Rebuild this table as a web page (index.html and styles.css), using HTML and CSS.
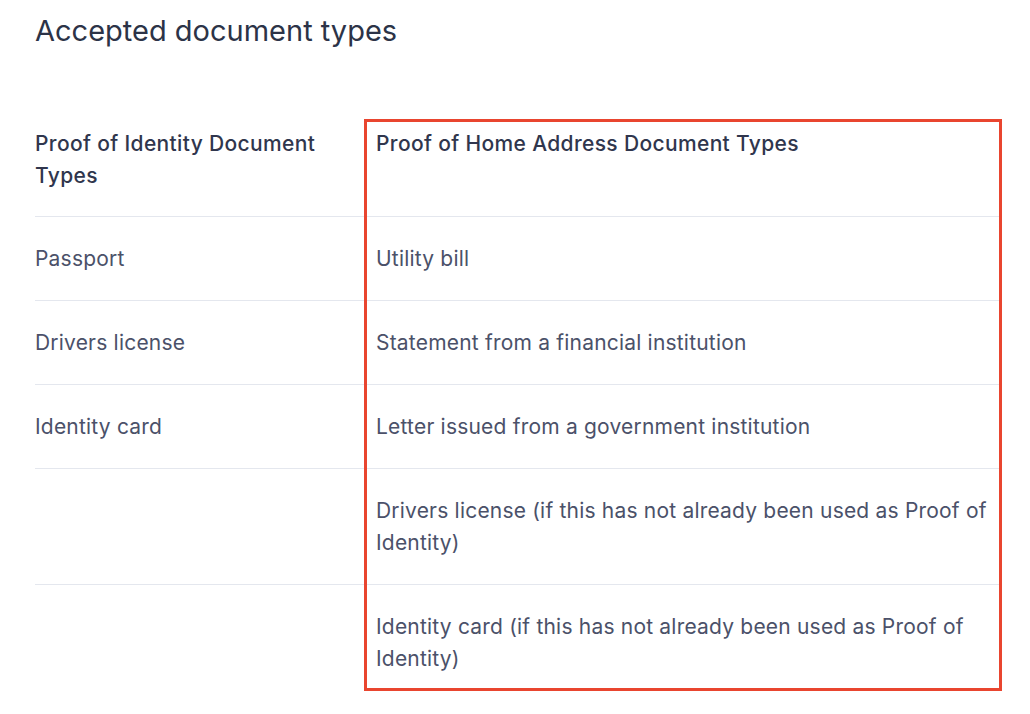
FILE: index.html
```html
<!DOCTYPE html>
<html lang="en">
<head>
<meta charset="utf-8">
<title>Accepted document types</title>
<link rel="stylesheet" href="styles.css">
</head>
<body>
<main class="page">
  <h1 class="title">Accepted document types</h1>
  <div class="table-wrap">
    <table class="doc-table">
      <colgroup>
        <col class="c-id">
        <col class="c-addr">
      </colgroup>
      <thead>
        <tr>
          <th class="col-id">Proof of Identity Document Types</th>
          <th class="col-addr">Proof of Home Address Document Types</th>
        </tr>
      </thead>
      <tbody>
        <tr><td class="col-id">Passport</td><td class="col-addr">Utility bill</td></tr>
        <tr><td class="col-id">Drivers license</td><td class="col-addr">Statement from a financial institution</td></tr>
        <tr><td class="col-id">Identity card</td><td class="col-addr">Letter issued from a government institution</td></tr>
        <tr><td class="col-id"></td><td class="col-addr">Drivers license (if this has not already been used as Proof of Identity)</td></tr>
        <tr><td class="col-id"></td><td class="col-addr">Identity card (if this has not already been used as Proof of Identity)</td></tr>
      </tbody>
    </table>
    <div class="highlight" aria-hidden="true"></div>
  </div>
</main>
</body>
</html>
```

FILE: styles.css
```css
html, body {
  margin: 0;
  padding: 0;
  background: #ffffff;
}

.page {
  padding: 11px 29px 0 35px;
  font-family: Inter, "Noto Sans", "Liberation Sans", sans-serif;
  color: #4b5169;
}

.title {
  margin: 0;
  font-size: 29px;
  line-height: 40px;
  font-weight: 400;
  color: #2c3347;
}

.table-wrap {
  position: relative;
  margin-top: 51px;
}

.doc-table {
  width: 966px;
  border-collapse: collapse;
  table-layout: fixed;
  font-size: 21px;
  line-height: 32px;
  letter-spacing: 0.2px;
}

.c-id {
  width: 330px;
}

.doc-table th,
.doc-table td {
  box-sizing: border-box;
  text-align: left;
  vertical-align: top;
  padding: 26px 0 25px 0;
  border-bottom: 1px solid #e4e7ee;
}

.doc-table tbody tr:last-child td {
  border-bottom: none;
}

.doc-table th {
  font-weight: 500;
  color: #30364d;
  letter-spacing: 0.35px;
  padding-bottom: 24px;
}

.doc-table .col-id {
  padding-right: 20px;
}

.doc-table .col-addr {
  padding-left: 11px;
  padding-right: 10px;
}

.highlight {
  position: absolute;
  top: 17px;
  left: 329px;
  width: 632px;
  height: 566px;
  border: 3px solid #e9452f;
  pointer-events: none;
}
```
